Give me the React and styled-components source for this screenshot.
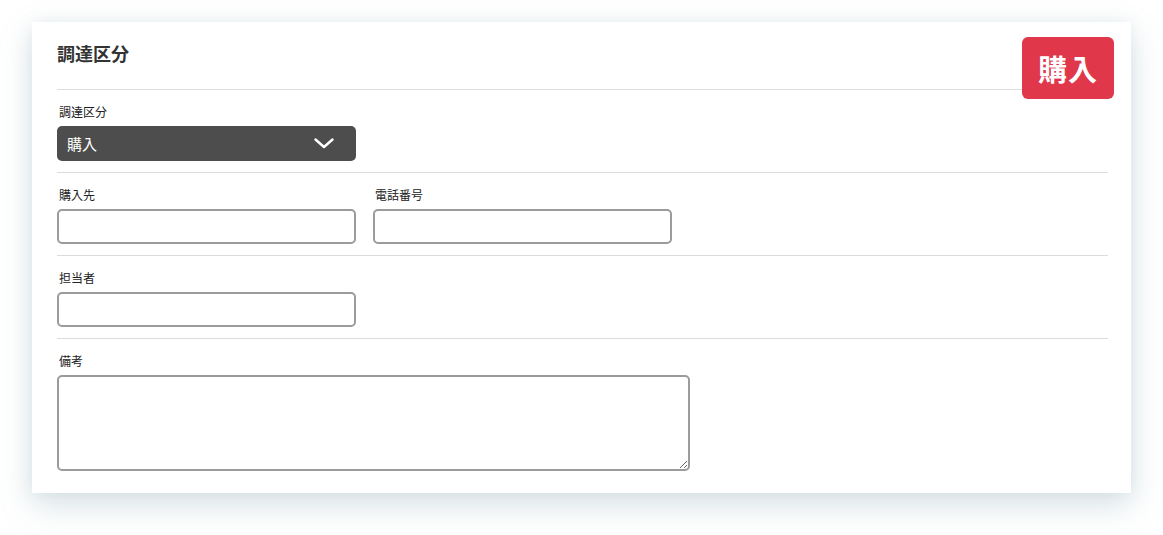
import React from "react";
import styled, { createGlobalStyle } from "styled-components";

const Global = createGlobalStyle`
  html, body { margin: 0; padding: 0; background: #ffffff; }
  body { font-family: "Noto Sans CJK JP", "Noto Sans", sans-serif; color: #222; }
  * { box-sizing: border-box; }
`;

const Page = styled.div`
  padding: 22px 0 0 32px;
  width: 1163px;
  height: 535px;
`;

const Card = styled.div`
  position: relative;
  width: 1099px;
  background: #fff;
  padding: 0 23px 0 25px;
  box-shadow: 0 12px 30px rgba(110, 150, 165, 0.28), 0 0 14px rgba(140, 170, 185, 0.12);
`;

const Header = styled.div`
  padding: 17px 0 22px;
  border-bottom: 1px solid #dcdcdc;
`;

const Title = styled.h2`
  margin: 0;
  font-size: 18px;
  line-height: 28px;
  font-weight: 700;
  color: #333;
`;

const Badge = styled.div`
  position: absolute;
  top: 15px;
  right: 17px;
  width: 92px;
  height: 62px;
  border-radius: 6px;
  background: #e0374b;
  color: #fff;
  font-size: 29px;
  font-weight: 700;
  display: flex;
  align-items: center;
  justify-content: center;
  letter-spacing: 1px;
`;

const Section = styled.div`
  padding: 14px 0 ${(p) => (p.$last ? "22px" : "11px")};
  border-bottom: ${(p) => (p.$last ? "none" : "1px solid #dcdcdc")};
  display: flex;
  gap: 17px;
`;

const Field = styled.div`
  display: flex;
  flex-direction: column;
  gap: 6px;
`;

const Label = styled.label`
  font-size: 12px;
  line-height: 16px;
  color: #222;
  padding-left: 2px;
`;

const SelectBox = styled.div`
  width: 299px;
  height: 35px;
  border-radius: 5px;
  background: #4d4d4d;
  color: #fff;
  font-size: 15px;
  display: flex;
  align-items: center;
  justify-content: space-between;
  padding: 0 22px 0 10px;
`;

const TextInput = styled.input`
  width: 299px;
  height: 35px;
  border: 2px solid #9b9b9b;
  border-radius: 5px;
  background: #fff;
  outline: none;
  font-family: inherit;
`;

const TextArea = styled.textarea`
  width: 633px;
  height: 96px;
  border: 2px solid #9b9b9b;
  border-radius: 5px;
  background: #fff;
  outline: none;
  resize: both;
  font-family: inherit;
  display: block;
`;

const Chevron = () => (
  <svg width="20" height="11" viewBox="0 0 20 11" fill="none">
    <path d="M1.5 1.5 L10 9 L18.5 1.5" stroke="#fff" strokeWidth="2.4" strokeLinecap="round" strokeLinejoin="round" />
  </svg>
);

export default function App() {
  return (
    <>
      <Global />
      <Page>
        <Card>
          <Header>
            <Title>調達区分</Title>
          </Header>
          <Badge>購入</Badge>
          <Section>
            <Field>
              <Label>調達区分</Label>
              <SelectBox>
                <span>購入</span>
                <Chevron />
              </SelectBox>
            </Field>
          </Section>
          <Section>
            <Field>
              <Label>購入先</Label>
              <TextInput />
            </Field>
            <Field>
              <Label>電話番号</Label>
              <TextInput />
            </Field>
          </Section>
          <Section>
            <Field>
              <Label>担当者</Label>
              <TextInput />
            </Field>
          </Section>
          <Section $last>
            <Field>
              <Label>備考</Label>
              <TextArea />
            </Field>
          </Section>
        </Card>
      </Page>
    </>
  );
}
